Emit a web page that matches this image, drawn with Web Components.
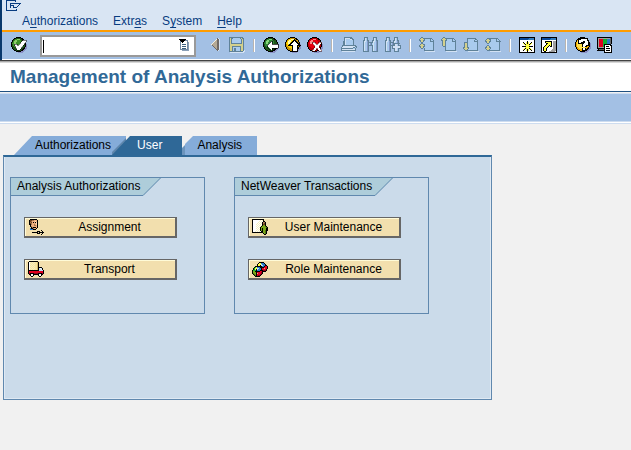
<!DOCTYPE html>
<html lang="en">
<head>
<meta charset="utf-8">
<title>Management of Analysis Authorizations</title>
<style>
  body { margin: 0; background: #f1f1f1; font: 12px/16px "Liberation Sans", Arial, sans-serif; color: #000; }
</style>
</head>
<body>
<sap-window>
  <sap-menu slot="menu"></sap-menu>
  <sap-toolbar slot="toolbar"></sap-toolbar>
  <sap-title slot="title">Management of Analysis Authorizations</sap-title>
  <sap-tabs>
    <sap-tab slot="tab" kind="first">Authorizations</sap-tab>
    <sap-tab slot="tab" kind="active">User</sap-tab>
    <sap-tab slot="tab" kind="last">Analysis</sap-tab>
    <sap-group>
      <span slot="label">Analysis Authorizations</span>
      <sap-button icon="face">Assignment</sap-button>
      <sap-button icon="truck">Transport</sap-button>
    </sap-group>
    <sap-group>
      <span slot="label">NetWeaver Transactions</span>
      <sap-button icon="user">User Maintenance</sap-button>
      <sap-button icon="roles">Role Maintenance</sap-button>
    </sap-group>
  </sap-tabs>
</sap-window>

<script>
const PALETTE = {
  K: '#000', W: '#fff', Y: '#f7e6a0', y: '#ffff40', L: '#d0b868', R: '#e00020', r: '#8c0018', B: '#b8dcf8',
  b: '#2878c8', G: '#78a818', g: '#4c7010', N: '#704020', n: '#a87850', S: '#f0b080', s: '#ffd8b0',
  D: '#666', d: '#a0a0a0', T: '#084898', c: '#f7f0c0', V: '#10b030', O: '#3f7fa8',
  t: '#5f8299', l: '#a9cbee', e: '#d3d08c', w: '#d3e2f4', v: '#8398c8', m: '#f4efdf', q: '#b5aa96', z: '#6f6a66'
};

// Pixel icons, one character per cell.
const PIXELS = {
  face: [
    '..KKKKKKK.......',
    '.KNNnnSSSK......',
    '.KNnSSSsSK......',
    '.KnNSKSKsK......',
    '.KNnSSSSsK......',
    '.KKnSSnSsK......',
    '..KSSSnnSK......',
    '..KnSSSSSK......',
    '...KnKKKSK......',
    '..bKKnSSK.......',
    '..bbbKKK........',
    '.............K..',
    '.........KKK..K.',
    '....KKKKKK.KKKKK',
    '.........KKK..K.',
    '.............K..'],
  truck: [
    '.KKKKKKKKK......',
    'KWcYcYcYYLK.....',
    'KWYcYcYYYLK.....',
    'KWcYcYcYYLK.....',
    'KWYcYcYYYLK.....',
    'KWcYcYcYYLK.....',
    'KWYcYcYYYLKKKK..',
    'KWcYcYcYYLKBWBK.',
    'KWYcYcYYYLKBBWK.',
    'KKKKKKKKKKKBBBBK',
    'KRRRRRRRRRRRRRRK',
    'KRRRRRRRRRRRRRRK',
    'KrKKKKrrrrKKKKrK',
    '.KKWWKKKKKKWWKK.',
    '..KWWK....KWWK..',
    '...KK......KK...'],
  user: [
    'KKKKKKKKKKKK....',
    'KWWWWWWWcWcK....',
    'KWWWWWWcWcWKK...',
    'KWWWWWcWcWKnnK..',
    'KWWWWcWcWcKnNK..',
    'KWWWcWcWcWKNNK..',
    'KWWWWcWcWcKGGK..',
    'KWWWcWcWcKGGGgK.',
    'KWWWWcWcKGGGGGgK',
    'KWWWcWcWKGKGGGKK',
    'KWWWWcWcKGKGGGKK',
    'KWWWcWcWKGKGGgKK',
    'KWWcWcWcWKKGGgK.',
    'KKKKKKKKKKKGGgK.',
    '...........KGgK.',
    '............KK..'],
  roles: [
    '................',
    '.......KKKKK....',
    '......KyybbbK...',
    '.....KyyyBbbbK..',
    '.....KyyKBBbbKK.',
    '...KKKKKKKbbKRRK',
    '..KVybbbKKKKRRRK',
    '.KVyyBBbbKRRSRRK',
    '.KVyKBbbbKRRRRK.',
    'KVVVKbbbKKKrrrK.',
    'KGGKKKKKRRKKKK..',
    'KGGGKRRRRrK.....',
    'KgGGKSRRRrK.....',
    '.KgGKRRRrK......',
    '..KgKRrrK.......',
    '...KKKKK........'],
  monitor: [
    'KKKKKKKKKKKKKKK.',
    'KddddddddddddDK.',
    'KdRRRRVVVVbbbDK.',
    'KdRRRRVVVVbbbDK.',
    'KdRRRRVVVVbbbDK.',
    'KdRRRRVVVVbbbDK.',
    'KdRRRRVVVVbbbDK.',
    'KdRRRRVKKKKKKK..',
    'KdRRRRVKWWWWWKK.',
    'KdRRRRVKWKKKWWK.',
    'KddddddKWWWWWWK.',
    'KKKKKKKKWKKKKWK.',
    '.KDDDDDKWWWWWWK.',
    'KKKKKKKKWKKKKWK.',
    '.......KWWWWWWK.',
    '.......KKKKKKKK.'],
  session: [
    'KKKKKKKKKKKKKKKK',
    'KTTTTTTTTTbObObK',
    'KTTTTTTTTbObObOK',
    'KWWWWWWWWWWWWWWK',
    'KWWWWWWWKWWWWWWK',
    'KWWWKWWyKyWWKWWK',
    'KWWWyKWyKyWKyWWK',
    'KWWWWyKyyyKyWWWK',
    'KWWWWWyyyyyWWWWK',
    'KWWKKKKyyyKKKKWK',
    'KWWWWWyyyyyWWWWK',
    'KWWWWyKyyyKyWWWK',
    'KWWWyKWyKyWKyWWK',
    'KWWWKWWyKyWWKWWK',
    'KWWWWWWWKWWWWWWK',
    'KKKKKKKKKKKKKKKK'],
  shortcut: [
    'KKKKKKKKKKKKKKKK',
    'KTTTTTTTTTbObObK',
    'KTTTTTTTTbObObOK',
    'KWWWWWWWWWWWWWWK',
    'KWWWKKKKKKKWdddK',
    'KWWWKyyyyyKWdddK',
    'KWWWWKKyyyKWdddK',
    'KWWWWKyyyyKWdddK',
    'KWWWKyyyKyKWdddK',
    'KWWKyyyKWKKWdddK',
    'KWKyyyKWWWWWdddK',
    'KWKyyKWWWWWWdddK',
    'KWKyyKWWWWWddddK',
    'KWKyyKWWWWdddddK',
    'KWWKKWWWddddddWK',
    'KKKKKKKKKKKKKKKK'],
  prev: [
    '................',
    '..........zw....',
    '.........mzzw...',
    '........mqzzw...',
    '.......mqqzzw...',
    '......mqqqzzw...',
    '.....mqqqqzzw...',
    '....mqqqqqzzw...',
    '.....zqqqqzzw...',
    '......zqqqzzw...',
    '.......zqqzzw...',
    '........zqzzw...',
    '.........zzzw...',
    '..........zw....',
    '................',
    '................'],
  save: [
    'tttttttttttttt..',
    'tettllllllltett.',
    'tetllllllllltet.',
    'tetllllllllltet.',
    'tetllllllllltet.',
    'tetllllllllltet.',
    'tetttttttttttet.',
    'teeeeeeeeeeeeet.',
    'teeeeeeeeeeeeet.',
    'teettttttttteet.',
    'teetlllllllteet.',
    'teetlttllllteet.',
    'teetlttllllteet.',
    'teetlttllllteetw',
    'ttttttttttttttww',
    '.wwwwwwwwwwwwww.'],
  print: [
    '...tttttttt.....',
    '...twwwwwttt....',
    '...twllllwwtt...',
    '...twlllllllt...',
    '..ttwlllllllt...',
    '..ttwlllllllt...',
    '..ttwlllllllt...',
    '..ttwlllllllt...',
    '.tttttttttttttt.',
    '.twwwwwwwwwwwwtt',
    'twwwwwwwwwwwttlt',
    'ttttttttttttllt.',
    'twwwwwwwwwwwwwt.',
    'ttttttttttttttt.',
    '.wwwwwwwwwwwww..',
    '................'],
  find: [
    '.tttt.....tttt..',
    '.twlt.....twlt..',
    '.twlt.....twlt..',
    'ttwltt...ttwltt.',
    'twwlvt...twwlvt.',
    'twllvtttttwllvt.',
    'twllvtlvtlwllvt.',
    'twllvtlvtlwllvt.',
    'twllvtttttwllvt.',
    'twllvt...twllvt.',
    'twllvt...twllvt.',
    'twllvt...twllvt.',
    'twllvt...twllvt.',
    'twllvt...twllvt.',
    'tttttt...tttttt.',
    '................'],
  findnext: [
    '.tttt....tttt...',
    '.twlt....twlt...',
    '.twlt....twlt...',
    'ttwltt..ttwltt..',
    'twwlvt..twwlvt..',
    'twllvttttwllvt..',
    'twllvtlvttttttt.',
    'twllvtlvttwwlt..',
    'twllvtttttwwlttt',
    'twllvt.twwwwwwwt',
    'twllvt.twwwwwwwt',
    'twllvt.tttwwlttt',
    'twllvt...twwlt..',
    'twllvt...twwlt..',
    'tttttt...ttttt..',
    '................'],
  first: [
    '..tt............',
    '.teettttttttt...',
    'teeeetllllltlt..',
    'tteettllllltllt.',
    '.teetlllllltttt.',
    '..ttllllllllllt.',
    '..tt.lllllllllt.',
    '.teettllllllllt.',
    'teeeetllllllllt.',
    'tteettllllllllt.',
    '.teetlllllllllt.',
    '..tt.tllllllllt.',
    '.....tllllllllt.',
    '.....tttttttttt.',
    '......wwwwwwwwww',
    '................'],
  pageup: [
    '..tt............',
    '.teettttttttt...',
    'teeeetllllltlt..',
    'tteettllllltllt.',
    '.teetlllllltttt.',
    '.teetlllllllllt.',
    '.teetlllllllllt.',
    '.teetlllllllllt.',
    '.teetlllllllllt.',
    '..tttlllllllllt.',
    '....tlllllllllt.',
    '....tlllllllllt.',
    '....tlllllllllt.',
    '....ttttttttttt.',
    '.....wwwwwwwwwww',
    '................'],
  pagedown: [
    '................',
    '....ttttttttt...',
    '....tllllllltt..',
    '....tlllllltllt.',
    '....tlllllltttt.',
    '.ttttlllllllllt.',
    '.teetlllllllllt.',
    '.teetlllllllllt.',
    '.teetlllllllllt.',
    '.teetlllllllllt.',
    'tteettllllllllt.',
    'teeeetllllllllt.',
    '.teetlllllllllt.',
    '..ttttttttttttt.',
    '.....wwwwwwwwwww',
    '................'],
  last: [
    '................',
    '..ttttttttttt...',
    '.teettllllltlt..',
    'teeeetllllltllt.',
    'tteettlllllttttt',
    '.teetlllllllllt.',
    '..ttllllllllllt.',
    '....llllllllllt.',
    '..ttllllllllllt.',
    '.teetlllllllllt.',
    'tteettllllllllt.',
    'teeeetllllllllt.',
    '.teetlllllllllt.',
    '..ttttttttttttt.',
    '.....wwwwwwwwwww',
    '................']
};

const ball = (dark, mid, light, glyph) => `
  <circle cx="9.5" cy="9.5" r="6.5" fill="#898fc4"/>
  <circle cx="7.5" cy="7.5" r="7.5" fill="#000"/>
  <circle cx="7.5" cy="7.5" r="6.5" fill="${dark}"/>
  <circle cx="6.5" cy="6.5" r="5" fill="${mid}"/>
  <path d="M3 4h1v-1h2v-1h3v1h-3v2h-1v2h-2z" fill="${light}"/>${glyph}`;

// Outline icons on the same 16-cell grid.
const SHAPES = {
  exit: '<path d="M9.5 1.5V.5H.5V10.5H10.5V8.5M4.5 7.5V3.5H14.5L10.5 7.5H7.5V5.5H4" fill="none" stroke="#083c80"/>',
  ok: ball('#1e5418', '#3f9428', '#8ecf68', '<path d="M3 7h3l1 2 5-6h3v2l-6 8H6z" fill="#fff" stroke="#000" stroke-width=".5"/>'),
  back: ball('#1e5418', '#2f8738', '#88d878', '<path d="M4 8.5L9 4v3h6v4H9v3z" fill="#fff" stroke="#000" stroke-width=".7"/>'),
  up: ball('#c99400', '#ffd600', '#fffbb0', '<path d="M9.500 3L15 8.500h-3V14H7V8.500H4z" fill="#fff" stroke="#000"/>'),
  cancel: ball('#b80008', '#e80010', '#ff8a88', '<path d="M5 5h3l2 3 2-3h3l-3 5 3 4h-3l-2-3-2 3H5l3-4z" fill="#fff" stroke="#400" stroke-width=".5"/>'),
  help: '<circle cx="9" cy="9" r="7" fill="#898fc4"/><circle cx="7.5" cy="7.5" r="7.5" fill="#000"/><circle cx="7.5" cy="7.5" r="6.5" fill="#efa800"/><circle cx="7" cy="7" r="5.5" fill="#ffe04a"/><path d="M5 7V4h2V3h4v2h1v2h-2v1H9v2M9 11v3" fill="none" stroke="#000" stroke-width="4"/><path d="M5 6V4h2V3h4v2h1v2h-2v1H9v2M9 11v2" fill="none" stroke="#fff" stroke-width="2"/>',
  list: '<path d="M5 4h7v9H5z" fill="#8aa0b8"/><path d="M3.5 2.5h7v9h-7z" fill="#fff" stroke="#7189a3"/><path d="M2 1h7v1H8v1H7v1H6v1H5V4H4V3H3V2H2z" fill="#000"/><path d="M5 6.5h4M5 8.5h4M5 10.5h4" stroke="#3a6080"/>'
};

function drawIcon(name) {
  let body;
  if (PIXELS[name]) {
    body = PIXELS[name].map((row, y) =>
      [...row.matchAll(/([^.])\1*/g)].map(run =>
        `<path fill="${PALETTE[run[1]]}" d="M${run.index} ${y}h${run[0].length}v1h-${run[0].length}z"/>`).join('')).join('');
  } else {
    body = SHAPES[name];
  }
  return `<svg viewBox="0 0 16 16" width="16" height="16" shape-rendering="crispEdges" aria-hidden="true">${body}</svg>`;
}

function define(name, render) {
  customElements.define(name, class extends HTMLElement {
    constructor() {
      super();
      this.attachShadow({ mode: 'open' });
    }
    connectedCallback() {
      this.shadowRoot.innerHTML = render(this);
    }
  });
}

define('sap-icon', el => `
  <style>:host { display: block; width: 16px; height: 16px; flex: none; } svg { display: block; overflow: visible; }</style>
  ${drawIcon(el.getAttribute('name'))}`);

define('sap-window', () => `
  <style>
    :host { display: block; }
    header { border-left: 2px solid #08386c; }
    .body { padding: 12px 3px 0; }
    .band { height: 27px; background: #a3c0e4; border-top: 1px solid #cddcef; border-bottom: 1px solid #cddcef; }
    .rule { height: 1px; background: #fff; border-bottom: 1px solid #cddcef; }
  </style>
  <header><slot name="menu"></slot><slot name="toolbar"></slot></header>
  <slot name="title"></slot>
  <div class="band"></div>
  <div class="rule"></div>
  <main class="body"><slot></slot></main>`);

define('sap-menu', () => `
  <style>
    :host { display: block; background: #d9e5f3; border-bottom: 2px solid #ff9c00; }
    .top { height: 12px; padding-left: 4px; }
    nav { display: flex; gap: 15px; padding: 1px 20px; }
    button { all: unset; color: #083c80; line-height: 16px; }
    u { text-underline-offset: 2px; }
  </style>
  <div class="top"><sap-icon name="exit"></sap-icon></div>
  <nav>
    <button>A<u>u</u>thorizations</button>
    <button>Extr<u>a</u>s</button>
    <button>S<u>y</u>stem</button>
    <button><u>H</u>elp</button>
  </nav>`);

const TOOLS = [
  ['prev', 'Previous'], ['save', 'Save'], null,
  ['back', 'Back'], ['up', 'Exit'], ['cancel', 'Cancel'], null,
  ['print', 'Print'], ['find', 'Find'], ['findnext', 'Find next'], null,
  ['first', 'First page'], ['pageup', 'Previous page'], ['pagedown', 'Next page'], ['last', 'Last page'], null,
  ['session', 'New session'], ['shortcut', 'Create shortcut'], null,
  ['help', 'Help'], ['monitor', 'Customize layout']
];
const toolButton = ([name, label]) => `<button aria-label="${label}"><sap-icon name="${name}"></sap-icon></button>`;

define('sap-toolbar', () => `
  <style>
    :host { display: flex; align-items: center; gap: 6px; height: 26px; padding: 0 0 1px 9px; background: #a3c0e4; border-bottom: 1px solid #fff; }
    button { all: unset; display: block; flex: none; }
    .command { display: flex; align-items: center; width: 152px; height: 18px; margin: 2px 5px 0 7px; border: 2px solid #999; background: #fff; flex: none; }
    input { all: unset; flex: 1; min-width: 0; padding-left: 2px; height: 16px; }
    .caret { width: 1px; height: 13px; margin-left: 1px; background: #000; }
    .command sap-icon { margin-right: 1px; }
    i { width: 1px; height: 13px; margin: 0 2px; background: #fff; border-left: 1px solid #b8b4b0; flex: none; }
  </style>
  ${toolButton(['ok', 'Enter'])}
  <div class="command">
    <span class="caret"></span>
    <input aria-label="Command">
    <button aria-label="Command history"><sap-icon name="list"></sap-icon></button>
  </div>
  ${TOOLS.map(tool => tool ? toolButton(tool) : '<i></i>').join('')}`);

define('sap-title', () => `
  <style>
    :host { display: block; background: #fff; border-top: 1px solid #424242; border-bottom: 1px solid #205080; box-shadow: inset 0 1px #a8a8a8, inset 0 2px #d8d8d8; margin-bottom: 1px; }
    h1 { margin: 0; padding: 4px 10px 2px; font-size: 19px; line-height: 24px; font-weight: bold; color: #316997; }
  </style>
  <h1><slot></slot></h1>`);

define('sap-tabs', () => `
  <style>
    :host { display: block; }
    .tabs { display: flex; padding-left: 11px; }
    .panel {
      display: grid; grid-template-columns: repeat(2, minmax(0, 195px)); gap: 29px; align-items: start;
      box-sizing: border-box; max-width: 489px; min-height: 245px; padding: 20px 6px 85px;
      background: #cbdbea; border: 1px solid #6088ae; border-top: 2px solid #2f6897;
      box-shadow: inset 1px 0 #dfe9f3, inset -1px -1px #dfe9f3;
    }
  </style>
  <div class="tabs" role="tablist"><slot name="tab"></slot></div>
  <div class="panel" role="tabpanel"><slot></slot></div>`);

const TAB_EDGE = {
  first: '<path d="M0 19L18 0h1v19z" fill="#85acd9"/>',
  active: '<path d="M0 0h14v19H0z" fill="#85acd9"/><path d="M0 16L14 2v17H0z" fill="#6087ad"/><path d="M0 19L18 0h1v19z" fill="#2f6897"/>',
  last: '<path d="M8 19v-7l3-3v10z" fill="#6c94bc"/><path d="M11 19V8l8-8v19z" fill="#85acd9"/>'
};
define('sap-tab', el => {
  const kind = el.getAttribute('kind');
  return `
  <style>
    :host { display: block; flex: none; }
    button { all: unset; display: flex; height: 19px; }
    svg { display: block; flex: none; }
    span { display: block; line-height: 19px; padding: 0 0 0 2px; background: #85acd9; }
    .first span { padding-right: 1px; }
    .active span { padding: 0 20px 0 6px; background: #2f6897; color: #fff; }
    .last { margin-left: -8px; }
    .last span { padding: 0 15px 0 4px; }
  </style>
  <button class="${kind}" role="tab" aria-selected="${kind === 'active'}">
    <svg width="19" height="19" viewBox="0 0 19 19" aria-hidden="true">${TAB_EDGE[kind]}</svg><span><slot></slot></span>
  </button>`;
});

define('sap-group', () => `
  <style>
    :host { display: block; border: 1px solid #6088ae; }
    .head { display: flex; }
    .label { height: 17px; line-height: 16px; padding: 0 3px 0 6px; background: #aecdda; border-bottom: 1px solid #6088ae; white-space: nowrap; }
    svg { display: block; flex: none; }
    .items { display: grid; gap: 21px; padding: 21px 27px 33px 13px; }
  </style>
  <div class="head">
    <div class="label"><slot name="label"></slot></div>
    <svg width="18" height="18" viewBox="0 0 18 18" aria-hidden="true"><path d="M0 0h18L0 18z" fill="#aecdda"/><path d="M0 17.5L17.5 0" stroke="#6088ae"/></svg>
  </div>
  <div class="items"><slot></slot></div>`);

define('sap-button', el => `
  <style>
    :host { display: block; }
    button {
      display: flex; align-items: center; box-sizing: border-box; width: 100%; height: 21px; margin: 0; padding: 0 0 0 3px;
      font: inherit; color: #000; background: #f2dfae; border: 1px solid #666; border-right-width: 2px; border-bottom-width: 2px;
      border-radius: 0; box-shadow: inset 1px 1px #fffbd8;
    }
    span { flex: 1; text-align: center; }
  </style>
  <button><sap-icon name="${el.getAttribute('icon')}"></sap-icon><span><slot></slot></span></button>`);
</script>
</body>
</html>
